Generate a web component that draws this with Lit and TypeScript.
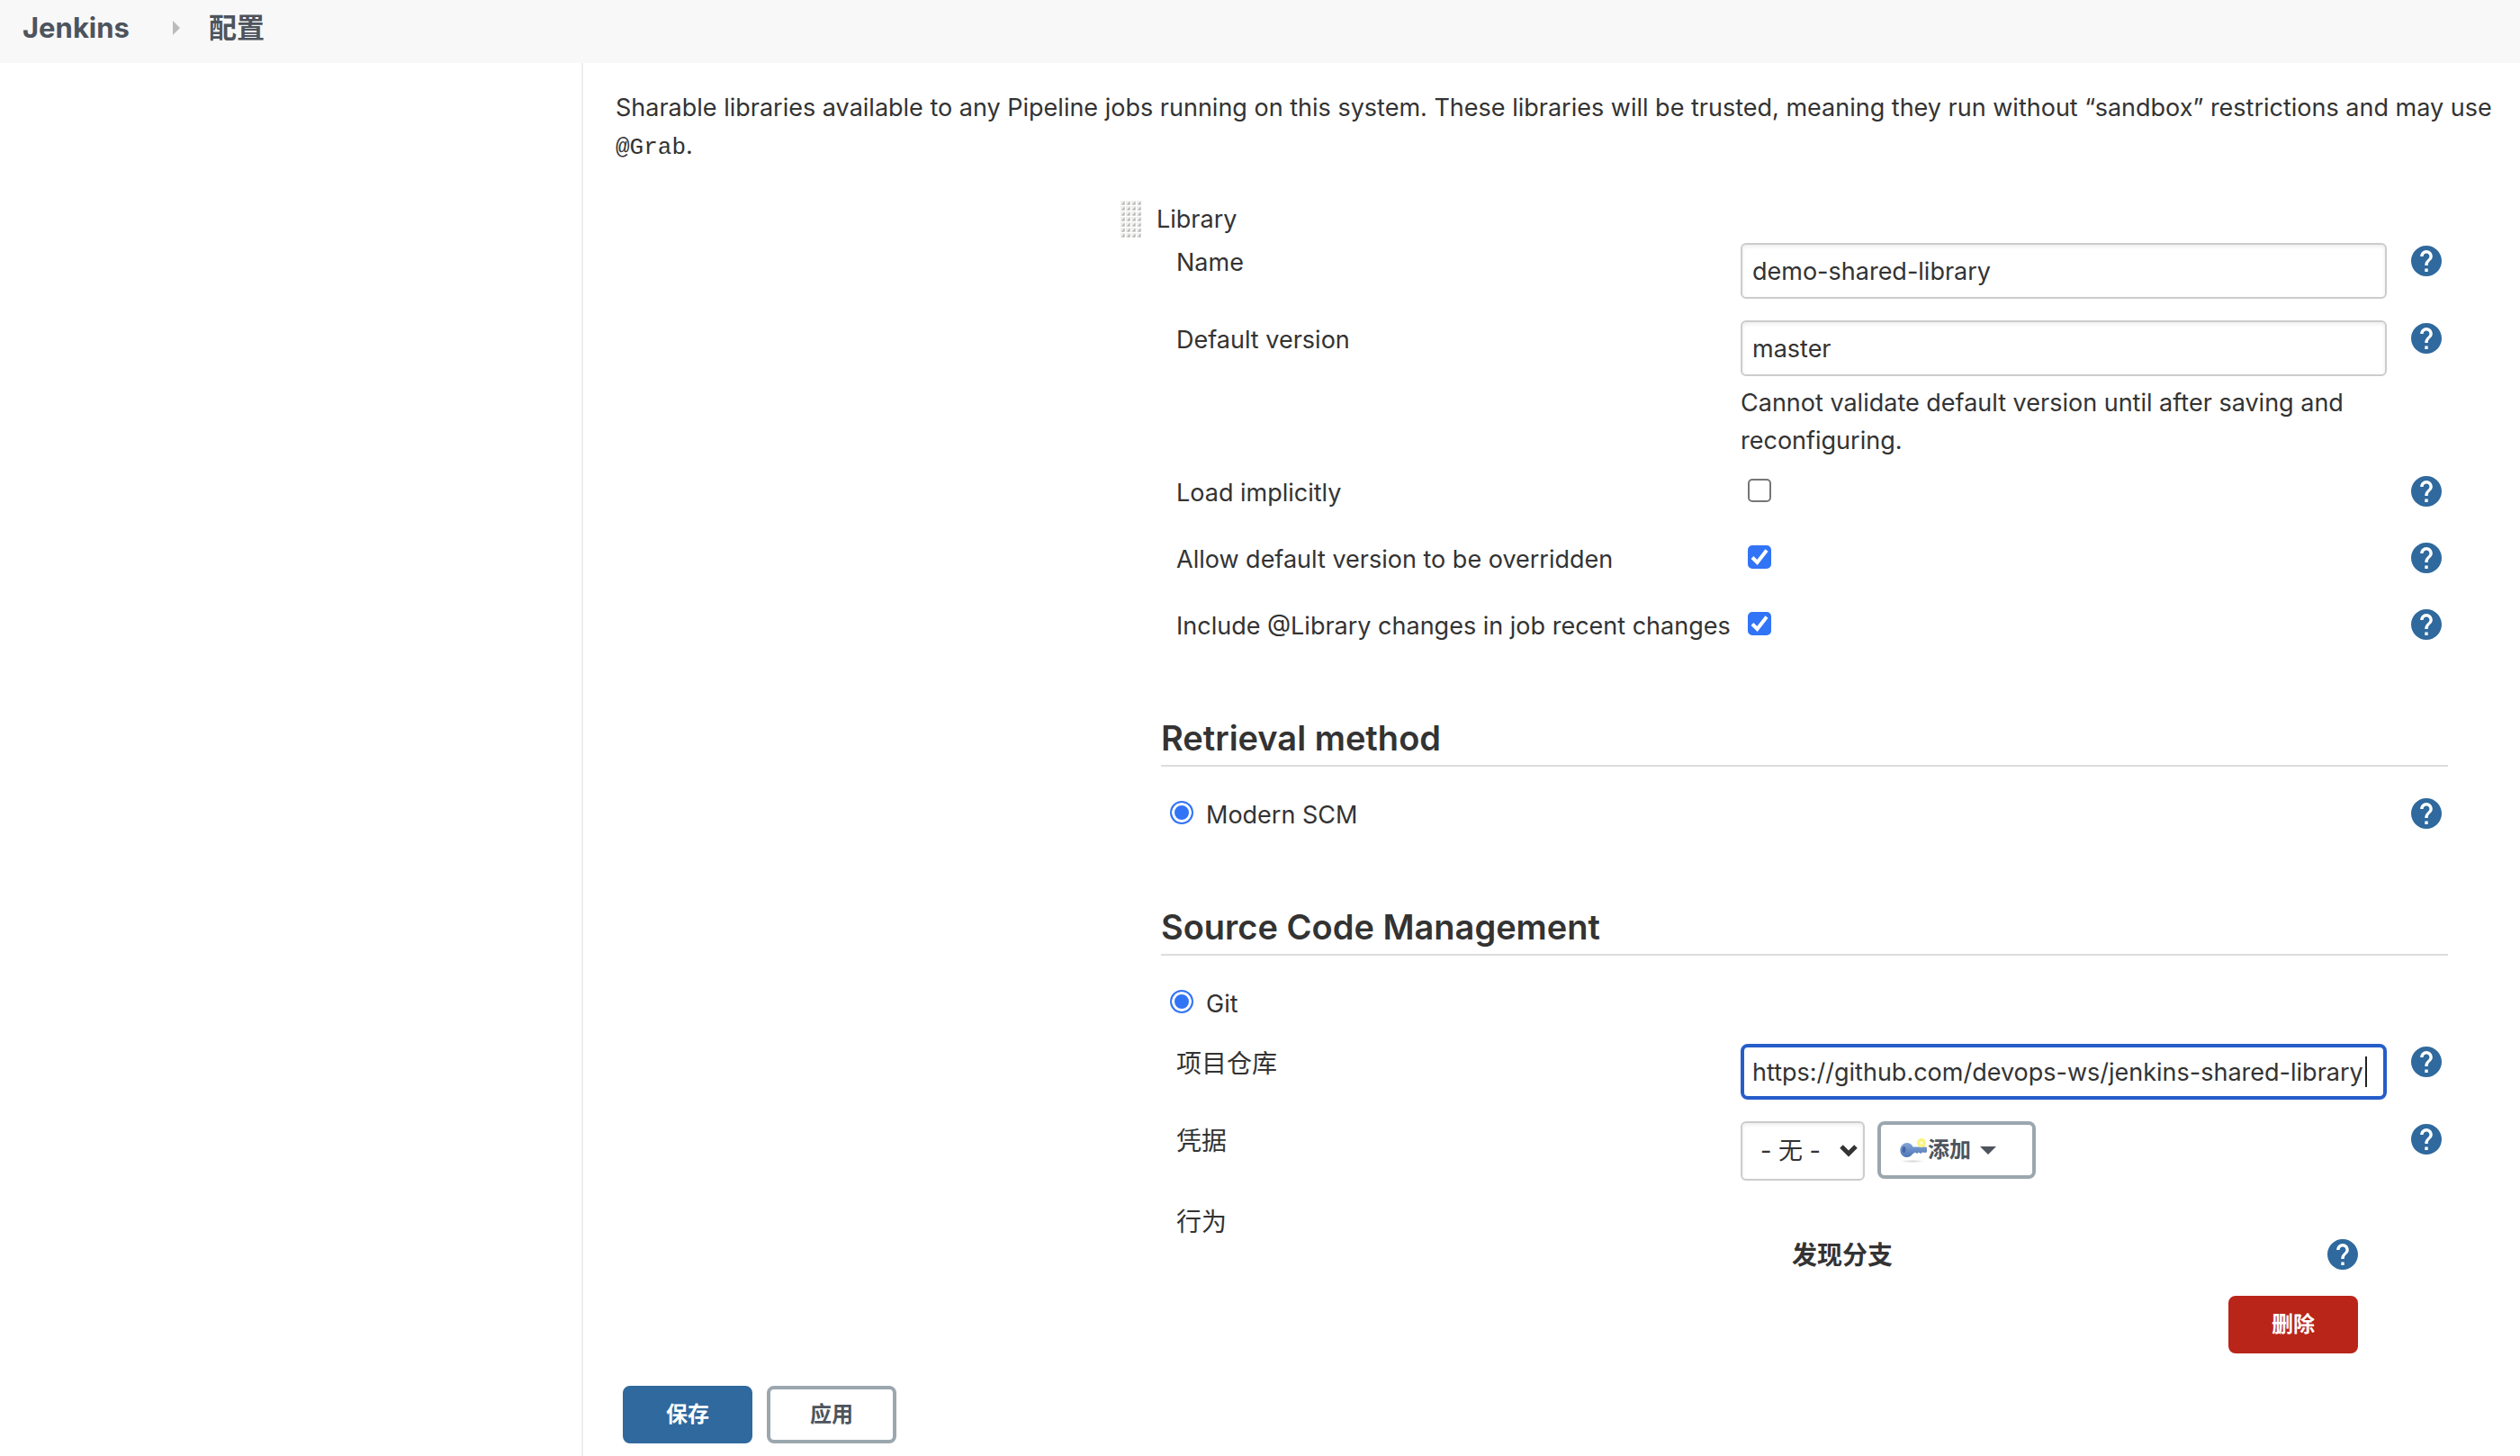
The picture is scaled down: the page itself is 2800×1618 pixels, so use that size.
import { LitElement, html, css, svg, nothing, TemplateResult } from "lit";
import { customElement, property } from "lit/decorators.js";
import { classMap } from "lit/directives/class-map.js";

/** Round blue "?" link placed at the end of a form row. */
@customElement("help-link")
class HelpLink extends LitElement {
  @property() topic = "";

  static styles = css`
    :host {
      display: block;
      padding-top: 3px;
    }
    .link {
      display: block;
      color: #2f699d;
    }
    .icon {
      display: block;
      width: 34px;
      height: 34px;
      fill: currentColor;
    }
  `;

  render() {
    return html`<a class="link" href="#help" aria-label="Help: ${this.topic}">
      <svg class="icon" viewBox="2 2 20 20" aria-hidden="true">
        <path
          d="M12 2C6.48 2 2 6.48 2 12s4.48 10 10 10 10-4.48 10-10S17.52 2 12 2zm1 17h-2v-2h2v2zm2.07-7.75l-.9.92C13.45 12.9 13 13.5 13 15h-2v-.5c0-1.1.45-2.1 1.17-2.83l1.24-1.26c.37-.36.59-.86.59-1.41 0-1.1-.9-2-2-2s-2 .9-2 2H8c0-2.21 1.79-4 4-4s4 1.79 4 4c0 .88-.36 1.68-.93 2.25z"
        />
      </svg>
    </a>`;
  }
}

const gripDots = Array.from({ length: 28 }, (_, i) => ({
  x: (i % 4) * 6,
  y: Math.floor(i / 4) * 6,
}));

const gripIcon = html`<svg class="grip" viewBox="0 0 24 42" aria-hidden="true">
  ${gripDots.map(
    ({ x, y }) => svg`
      <rect x=${x + 1} y=${y + 1} width="5" height="5" fill="#eeeeed" />
      <path d="M${x + 2} ${y + 5.5}L${x + 5.5} ${y + 1.5}V${y + 5.5}Z" fill="#b3b3b0" />`
  )}
</svg>`;

const keyIcon = html`<svg class="key" viewBox="0 0 32 32" aria-hidden="true">
  <defs>
    <linearGradient id="steel" x1="0" y1="0" x2="0" y2="1">
      <stop offset="0" stop-color="#86a5d6" />
      <stop offset="1" stop-color="#4d74b6" />
    </linearGradient>
    <radialGradient id="shade">
      <stop offset="0" stop-color="#000" stop-opacity=".16" />
      <stop offset="1" stop-color="#000" stop-opacity="0" />
    </radialGradient>
  </defs>
  <ellipse cx="15" cy="28.500" rx="14" ry="2" fill="url(#shade)" />
  <path
    d="M9 8a7.500 8 0 1 0 6 12.500L18 18.500l2 1.500 2-1.500 2 1.500 2-1.500 4 .5 1-1.500v-4l-1-1H15.500A7.500 8 0 0 0 9 8z"
    fill="url(#steel)"
  />
  <ellipse cx="5.500" cy="15.500" rx="2" ry="3.500" fill="#4468a6" />
  <circle cx="25" cy="8" r="5" fill="#fbf47c" />
  <circle cx="25" cy="8" r="2" fill="#fffbc8" />
</svg>`;

@customElement("app-root")
class AppRoot extends LitElement {
  static styles = css`
    :host {
      display: block;
      color: #333;
      background: #fff;
      font: 27px/42px Inter, "Noto Sans CJK SC", sans-serif;
    }
    * {
      box-sizing: border-box;
    }

    .page {
      display: flex;
      flex-direction: column;
      min-height: 100vh;
    }

    .crumbs {
      display: flex;
      align-items: center;
      gap: 32px;
      margin: 0;
      padding: 0 25px 8px;
      list-style: none;
      background: #f8f8f8;
      font-size: 31px;
      line-height: 62px;
      font-weight: 700;
    }
    .crumb {
      display: flex;
      align-items: center;
      gap: 48px;
    }
    .crumb-link {
      color: #4d545d;
      text-decoration: none;
    }
    .crumb-arrow {
      display: block;
      width: 8px;
      height: 16px;
      fill: #bbb;
    }

    .body {
      display: grid;
      grid-template-columns: 648px minmax(0, 1fr);
      flex: 1;
    }
    .side {
      border-right: 2px solid #eee;
    }
    .main {
      padding: 29px 8px 14px 36px;
    }
    .intro {
      margin: 0;
    }
    .code {
      font: 26px/26px "Liberation Mono", monospace;
    }

    .library {
      margin: 39px 72px 0 560px;
    }
    .library-head {
      display: flex;
      gap: 17px;
      margin-bottom: 5px;
    }
    .grip {
      flex: none;
      width: 24px;
      height: 42px;
    }
    .form {
      padding-left: 46px;
    }

    .rows {
      display: flex;
      flex-direction: column;
      gap: 24px;
      padding: 0 7px 0 17px;
    }
    .row {
      display: grid;
      grid-template-columns: minmax(0, 627fr) minmax(0, 718fr) 61px;
      min-height: 50px;
    }
    .row help-link {
      padding-left: 27px;
    }
    .label {
      padding-top: 1px;
      white-space: nowrap;
    }
    .label:lang(zh) {
      font-size: 28px;
    }
    .note {
      margin: 9px 0 -9px;
    }

    .title {
      margin: 72px 0 32px;
      padding-bottom: 6px;
      border-bottom: 2px solid #ddd;
      font-size: 38px;
      line-height: 48px;
      font-weight: 600;
    }
    .choice {
      display: flex;
      min-height: 50px;
      padding: 0 7px 0 10px;
    }
    .choice help-link {
      margin-left: auto;
    }
    .choice + .rows {
      margin-top: 16px;
    }

    .text,
    .select {
      display: block;
      margin: 0;
      color: inherit;
      background: #fff;
      border: 2px solid #ccc;
      border-radius: 6px;
      box-shadow: inset 0 2px 4px rgba(0, 0, 0, 0.08);
      font: inherit;
      outline: none;
    }
    .text {
      width: 100%;
      height: 62px;
      padding: 0 11px;
    }
    .text.active {
      padding: 0 9px;
      border: 4px solid #265dc9;
      border-radius: 8px;
      box-shadow: none;
    }
    .field,
    .tick {
      position: relative;
    }
    .caret {
      position: absolute;
      top: 14px;
      right: 22px;
      width: 2px;
      height: 34px;
      background: #222;
    }

    .tick {
      width: 26px;
      height: 26px;
      margin: 6px 0 0 8px;
    }
    .check {
      display: block;
      appearance: none;
      width: 26px;
      height: 26px;
      margin: 0;
      background: #fff;
      border: 2px solid #767676;
      border-radius: 5px;
    }
    .check:checked {
      background: #3274f6;
      border-color: #3274f6;
    }
    .mark {
      position: absolute;
      inset: 0;
      fill: none;
      stroke: #fff;
      stroke-width: 4;
      pointer-events: none;
    }
    .radio {
      appearance: none;
      width: 26px;
      height: 26px;
      margin: 6px 14px 0 0;
      background: #3274f6;
      border: 2px solid #3274f6;
      border-radius: 50%;
      box-shadow: inset 0 0 0 3px #fff;
    }

    .credentials {
      display: flex;
      align-items: flex-start;
      gap: 14px;
    }
    .select {
      appearance: none;
      width: 138px;
      height: 66px;
      padding: 0 40px 0 20px;
    }
    .chevron {
      position: absolute;
      top: 25px;
      right: 8px;
      width: 20px;
      height: 16px;
      fill: none;
      stroke: #333;
      stroke-width: 5;
      pointer-events: none;
    }

    .button {
      display: inline-flex;
      align-items: center;
      justify-content: center;
      min-width: 144px;
      height: 64px;
      margin: 0;
      padding: 0 20px;
      color: #4d545d;
      background: #fff;
      border: 4px solid #9ba7ae;
      border-radius: 8px;
      font: inherit;
      font-size: 24px;
      line-height: 32px;
      font-weight: 700;
    }
    .button.add {
      justify-content: flex-start;
      min-width: 176px;
    }
    .button.save {
      color: #fff;
      background: #2f699d;
      border-color: #2f699d;
    }
    .button.remove {
      color: #fff;
      background: #b92519;
      border-color: #b92519;
    }
    .key {
      width: 32px;
      height: 32px;
    }
    .arrow {
      width: 18px;
      height: 9px;
      margin-left: 10px;
      fill: currentColor;
    }

    .behaviours {
      display: flex;
      flex-direction: column;
      align-items: flex-end;
      gap: 24px;
      padding: 38px 32px 0 57px;
    }
    .behaviour {
      display: flex;
      justify-content: space-between;
      align-self: stretch;
      height: 42px;
      font-size: 28px;
      font-weight: 700;
    }

    .actions {
      display: flex;
      gap: 16px;
      margin-top: 36px;
      padding-left: 8px;
    }
  `;

  private row(
    id: string,
    label: string,
    control: TemplateResult,
    lang = "en"
  ) {
    return html`<div class="row">
      <label class="label" lang=${lang} for=${id}>${label}</label>
      ${control}
      <help-link topic=${label}></help-link>
    </div>`;
  }

  private text(id: string, value: string, note = "", active = false) {
    return html`<div class="field">
      <input
        class=${classMap({ text: true, active })}
        id=${id}
        type="text"
        .value=${value}
      />
      ${active ? html`<span class="caret"></span>` : nothing}
      ${note ? html`<p class="note">${note}</p>` : nothing}
    </div>`;
  }

  private check(id: string, checked: boolean) {
    return html`<div class="tick">
      <input class="check" id=${id} type="checkbox" .checked=${checked} />
      ${checked
        ? html`<svg class="mark" viewBox="0 0 26 26" aria-hidden="true">
            <path d="M5 13.500L10.500 19L21 5.500" />
          </svg>`
        : nothing}
    </div>`;
  }

  private choice(id: string, label: string, help: boolean) {
    return html`<div class="choice">
      <input class="radio" id=${id} name=${id} type="radio" checked />
      <label class="label" for=${id}>${label}</label>
      ${help ? html`<help-link topic=${label}></help-link>` : nothing}
    </div>`;
  }

  private credentials() {
    return html`<div class="credentials">
      <div class="field">
        <select class="select" id="credentials">
          <option>- 无 -</option>
        </select>
        <svg class="chevron" viewBox="0 0 20 16" aria-hidden="true">
          <path d="M2 3L10 11L18 3" />
        </svg>
      </div>
      <button class="button add" type="button">
        ${keyIcon}<span>添加</span>
        <svg class="arrow" viewBox="0 0 18 9" aria-hidden="true">
          <path d="M0 0H18L9 9Z" />
        </svg>
      </button>
    </div>`;
  }

  render() {
    return html`<div class="page">
      <nav>
        <ol class="crumbs">
          <li class="crumb">
            <a class="crumb-link" href="#home">Jenkins</a>
            <svg class="crumb-arrow" viewBox="0 0 8 16" aria-hidden="true">
              <path d="M0 0L8 8L0 16Z" />
            </svg>
          </li>
          <li class="crumb"><a class="crumb-link" href="#configure">配置</a></li>
        </ol>
      </nav>
      <div class="body">
        <aside class="side"></aside>
        <main class="main">
          <p class="intro">
            Sharable libraries available to any Pipeline jobs running on this
            system. These libraries will be trusted, meaning they run without
            “sandbox” restrictions and may use <code class="code">@Grab</code>.
          </p>
          <section class="library">
            <div class="library-head">
              ${gripIcon}<span class="label">Library</span>
            </div>
            <div class="form">
              <div class="rows">
                ${this.row("name", "Name", this.text("name", "demo-shared-library"))}
                ${this.row(
                  "version",
                  "Default version",
                  this.text(
                    "version",
                    "master",
                    "Cannot validate default version until after saving and reconfiguring."
                  )
                )}
                ${this.row("implicit", "Load implicitly", this.check("implicit", false))}
                ${this.row(
                  "override",
                  "Allow default version to be overridden",
                  this.check("override", true)
                )}
                ${this.row(
                  "changes",
                  "Include @Library changes in job recent changes",
                  this.check("changes", true)
                )}
              </div>

              <h2 class="title">Retrieval method</h2>
              ${this.choice("modern-scm", "Modern SCM", true)}

              <h2 class="title">Source Code Management</h2>
              ${this.choice("git", "Git", false)}
              <div class="rows">
                ${this.row(
                  "repository",
                  "项目仓库",
                  this.text(
                    "repository",
                    "https://github.com/devops-ws/jenkins-shared-library",
                    "",
                    true
                  ),
                  "zh"
                )}
                ${this.row("credentials", "凭据", this.credentials(), "zh")}
                <div class="row">
                  <span class="label" lang="zh">行为</span>
                  <div class="behaviours">
                    <div class="behaviour">
                      <span>发现分支</span>
                      <help-link topic="发现分支"></help-link>
                    </div>
                    <button class="button remove" type="button">删除</button>
                  </div>
                </div>
              </div>
            </div>
          </section>
          <div class="actions">
            <button class="button save" type="submit">保存</button>
            <button class="button" type="button">应用</button>
          </div>
        </main>
      </div>
    </div>`;
  }
}
